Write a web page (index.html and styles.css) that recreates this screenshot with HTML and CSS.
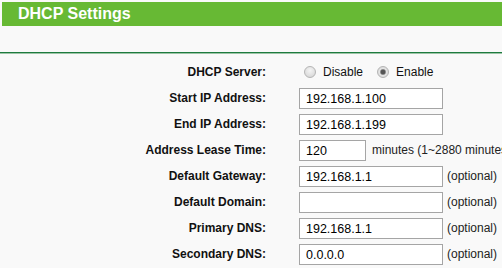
FILE: index.html
```html
<!DOCTYPE html>
<html lang="en">
<head>
  <meta charset="UTF-8" />
  <title>DHCP Settings</title>
  <link rel="stylesheet" href="styles.css">
</head>
<body>

  <!-- Title bar -->
  <div class="title-bar">DHCP Settings</div>
  <div class="divider"></div>

  <!-- Settings form -->
  <form class="settings">
    <label class="field-label">DHCP Server:</label>
    <div class="field">
      <label class="radio"><input type="radio" name="dhcp" value="0"> Disable</label>
      <label class="radio"><input type="radio" name="dhcp" value="1" checked> Enable</label>
    </div>

    <label class="field-label" for="startIp">Start IP Address:</label>
    <div class="field"><input class="text" type="text" id="startIp" value="192.168.1.100"></div>

    <label class="field-label" for="endIp">End IP Address:</label>
    <div class="field"><input class="text" type="text" id="endIp" value="192.168.1.199"></div>

    <label class="field-label" for="lease">Address Lease Time:</label>
    <div class="field"><input class="text short" type="text" id="lease" value="120"><span class="note">minutes (1~2880 minutes)</span></div>

    <label class="field-label" for="gateway">Default Gateway:</label>
    <div class="field"><input class="text" type="text" id="gateway" value="192.168.1.1"><span class="note">(optional)</span></div>

    <label class="field-label" for="domain">Default Domain:</label>
    <div class="field"><input class="text" type="text" id="domain" value=""><span class="note">(optional)</span></div>

    <label class="field-label" for="dns1">Primary DNS:</label>
    <div class="field"><input class="text" type="text" id="dns1" value="192.168.1.1"><span class="note">(optional)</span></div>

    <label class="field-label" for="dns2">Secondary DNS:</label>
    <div class="field"><input class="text" type="text" id="dns2" value="0.0.0.0"><span class="note">(optional)</span></div>
  </form>

</body>
</html>
```

FILE: styles.css
```css
body, html {
  margin: 0;
  padding: 0;
}

body {
  background: #f9f9f9;
  font-family: "Liberation Sans", Arial, sans-serif;
  font-size: 12px;
  color: #111;
  overflow: hidden;
  width: 502px;
}

.title-bar {
  margin: 2px 0 0 2px;
  height: 24px;
  line-height: 24px;
  padding-left: 16px;
  background: #67b934;
  color: #fff;
  font-size: 16px;
  font-weight: bold;
}

.divider {
  margin-top: 26px;
  border-top: 1px solid #1e7b3f;
  border-bottom: 1px solid #9cc4a6;
}

.settings {
  display: grid;
  grid-template-columns: 266px 1fr;
  grid-auto-rows: 26px;
  column-gap: 33px;
  margin-top: 5px;
  align-items: center;
}

.field-label {
  text-align: right;
  font-weight: bold;
  color: #111;
}

.field {
  display: flex;
  align-items: center;
  white-space: nowrap;
}

.radio {
  display: flex;
  align-items: center;
  margin-right: 9px;
}

.radio input {
  appearance: none;
  width: 12px;
  height: 12px;
  margin: 0 7px 0 5px;
  border: 1px solid #b4b4b4;
  border-radius: 50%;
  background: radial-gradient(circle at 50% 35%, #f4f4f4, #d2d2d2);
}

.radio input:checked {
  background: radial-gradient(circle, #555 0 2px, #8a8a8a 2.5px, #e4e4e4 3.5px, #cfcfcf);
}

.text {
  box-sizing: border-box;
  width: 144px;
  height: 21px;
  margin: 0;
  padding: 1px 6px 0;
  border: 1px solid #a5a5a5;
  background: #fff;
  font-family: "Liberation Sans", Arial, sans-serif;
  font-size: 12.5px;
  color: #000;
  outline: none;
}

.text.short {
  width: 67px;
}

.note {
  margin-left: 4px;
  color: #222;
}

.text.short + .note {
  margin-left: 6px;
}
```
